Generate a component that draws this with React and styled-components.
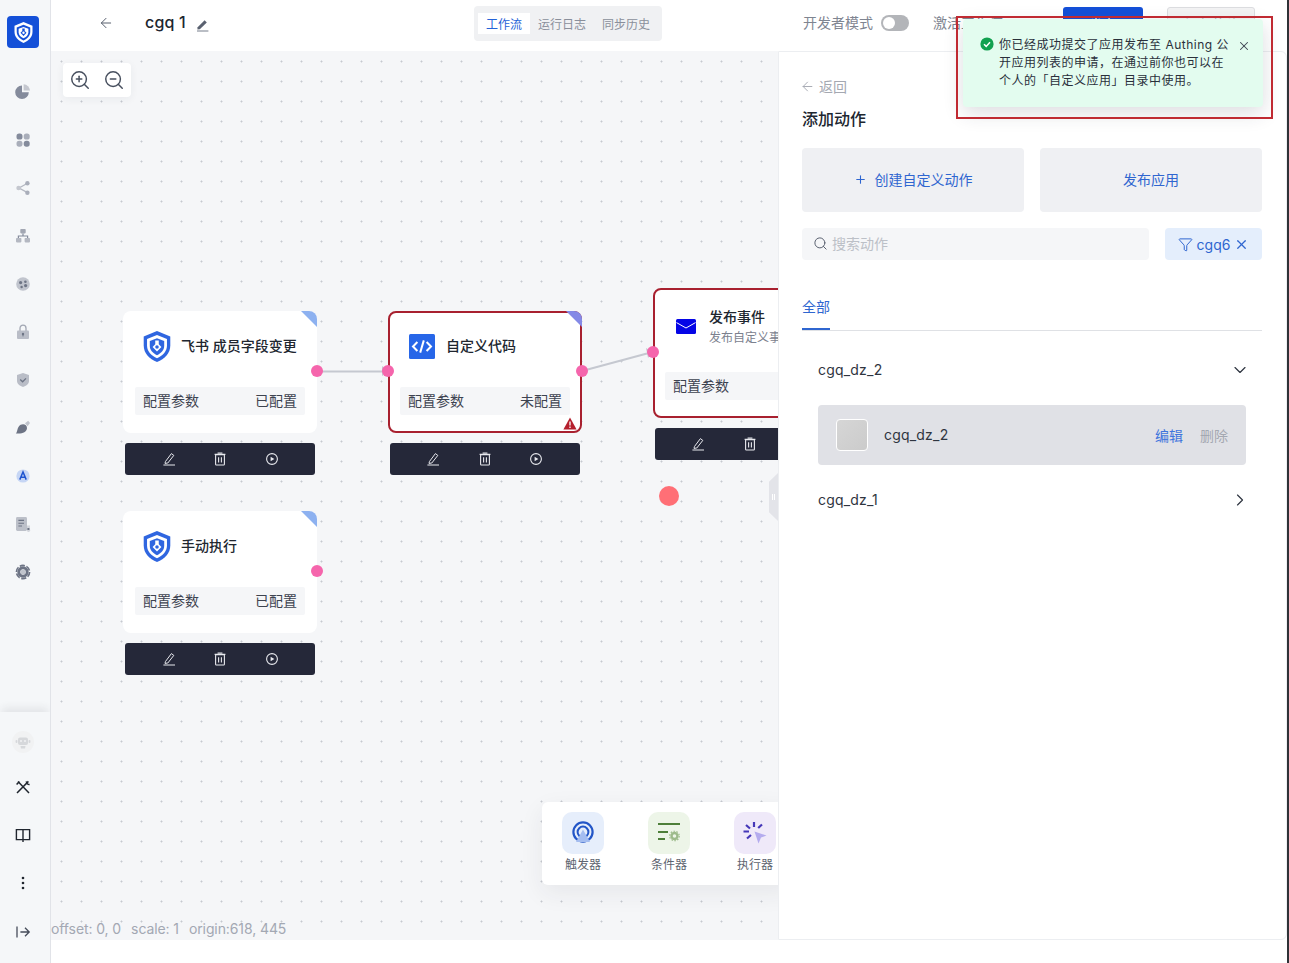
import React from 'react';
import styled, { createGlobalStyle } from 'styled-components';
import { ArrowLeft, ChevronDown, ChevronRight, Search, Filter, X, Plus, ZoomIn, ZoomOut } from 'lucide-react';

const GlobalStyle = createGlobalStyle`
  html, body { margin: 0; padding: 0; background: #fff; }
  body {
    font-family: Inter, "Noto Sans CJK SC", "Noto Sans", sans-serif;
    color: #293350;
    overflow: hidden;
  }
  * { box-sizing: border-box; }
`;

const Page = styled.div`
  display: flex;
  width: 1289px;
  height: 963px;
  overflow: hidden;
  position: relative;
`;

const DarkEdge = styled.div`
  width: 2px;
  flex: none;
  background: #2f3237;
`;

/* ---- left rail ---- */
const Rail = styled.aside`
  width: 51px;
  flex: none;
  display: flex;
  flex-direction: column;
  background: #f5f7f9;
  border-right: 1px solid #e1e3e8;
`;

const Logo = styled.div`
  width: 32px;
  height: 32px;
  margin: 16px 0 20px 7px;
  border-radius: 4px;
  background: #1450d8;
  display: flex;
  align-items: center;
  justify-content: center;
`;

const RailNav = styled.nav`
  flex: 1;
  display: flex;
  flex-direction: column;
`;

const RailItem = styled.div`
  height: 48px;
  display: flex;
  align-items: center;
  justify-content: center;
  padding-right: 5px;
`;

const RobotSlot = styled.div`
  height: 51px;
  padding: 19px 5px 0 0;
  display: flex;
  justify-content: center;
`;

const RailBottom = styled.div`
  display: flex;
  flex-direction: column;
  padding-bottom: 8px;
  box-shadow: 0 -6px 8px -2px rgba(40, 45, 60, 0.09);
  clip-path: inset(-20px 0 0 0);
`;

/* ---- header ---- */
const Main = styled.div`
  flex: 1;
  min-width: 0;
  display: flex;
  flex-direction: column;
`;

const Header = styled.header`
  height: 51px;
  flex: none;
  display: flex;
  align-items: center;
  background: #fff;
  padding-bottom: 5px;
`;

const BackBtn = styled.div`
  margin-left: 47px;
  width: 16px;
  display: flex;
  color: #59606f;
`;

const AppName = styled.div`
  margin-left: 31px;
  margin-top: -2px;
  font-size: 16px;
  font-weight: 500;
  color: #20262f;
  letter-spacing: 0.2px;
`;

const RenameBtn = styled.div`
  margin-left: 10px;
  margin-top: 3px;
  display: flex;
`;

const TabGroup = styled.div`
  margin-left: 265px;
  width: 188px;
  height: 35px;
  padding: 7px 4px;
  margin-top: 1px;
  border-radius: 4px;
  background: #f0f1f3;
  display: flex;
`;

const HeadTab = styled.div`
  width: ${({ $w }) => $w}px;
  display: flex;
  align-items: center;
  justify-content: center;
  font-size: 12px;
  color: ${({ $active }) => ($active ? '#2563d8' : '#8a8f9b')};
  background: ${({ $active }) => ($active ? '#fff' : 'transparent')};
`;

const DevLabel = styled.div`
  margin-left: 141px;
  margin-top: -2px;
  font-size: 14px;
  color: #7f8591;
`;

const Toggle = styled.div`
  margin-left: 8px;
  width: 28px;
  height: 16px;
  border-radius: 8px;
  background: #b3b5b9;
  padding: 2px;
  display: flex;
`;

const Knob = styled.div`
  width: 12px;
  height: 12px;
  border-radius: 50%;
  background: #fff;
`;

const ActiveLabel = styled.div`
  margin-left: 24px;
  margin-top: -2px;
  width: 130px;
  font-size: 14px;
  color: #7f8591;
  white-space: nowrap;
`;

const HeadButton = styled.div`
  margin-top: 1px;
  margin-left: ${({ $ml }) => $ml}px;
  width: ${({ $w }) => $w}px;
  height: 34px;
  border-radius: 3px;
  font-size: 14px;
  display: flex;
  align-items: center;
  justify-content: center;
  background: ${({ $primary }) => ($primary ? '#1450d8' : '#f3f3f4')};
  color: ${({ $primary }) => ($primary ? '#fff' : '#b0b3ba')};
  border: ${({ $primary }) => ($primary ? 'none' : '1px solid #dcdde0')};
`;

/* ---- workspace ---- */
const Workspace = styled.div`
  height: 889px;
  flex: none;
  display: flex;
`;

const Canvas = styled.section`
  flex: 1;
  min-width: 0;
  position: relative;
  overflow: hidden;
  background-color: #f5f6f8;
  background-image: radial-gradient(circle at 10.5px 10.5px, #c6c9d0 0.9px, transparent 1.1px);
  background-size: 20px 20px;
`;

const ZoomBar = styled.div`
  position: absolute;
  left: 12px;
  top: 12px;
  width: 68px;
  height: 34px;
  border-radius: 4px;
  background: #fff;
  box-shadow: 0 2px 8px rgba(40, 45, 60, 0.06);
  display: flex;
  align-items: center;
  justify-content: center;
  gap: 12px;
  color: #474f5e;
`;

const Edges = styled.svg`
  position: absolute;
  left: 0;
  top: 0;
  width: 727px;
  height: 600px;
`;

const Node = styled.div`
  position: absolute;
  left: ${({ $x }) => $x}px;
  top: ${({ $y }) => $y}px;
  width: 194px;
  height: ${({ $h }) => $h || 122}px;
  border-radius: 8px;
  background: #fff;
  border: ${({ $error }) => ($error ? '2px solid #a8202f' : 'none')};
`;

const Corner = styled.div`
  position: absolute;
  right: ${({ $error }) => ($error ? -2 : 0)}px;
  top: ${({ $error }) => ($error ? -2 : 0)}px;
  width: 16px;
  height: 16px;
  border-top-right-radius: 8px;
  background: ${({ $color }) => $color};
  clip-path: polygon(0 0, 100% 0, 100% 100%);
`;

const NodeHead = styled.div`
  position: absolute;
  left: ${({ $left }) => $left}px;
  top: ${({ $top }) => $top}px;
  display: flex;
  align-items: center;
  gap: ${({ $gap }) => $gap}px;
  height: 30px;
`;

const NodeTitle = styled.div`
  font-size: 14px;
  font-weight: 500;
  color: #20262f;
  white-space: nowrap;
  margin-bottom: ${({ $sub }) => ($sub ? 0 : 2)}px;
`;

const NodeSub = styled.div`
  font-size: 12px;
  color: #7b818e;
  white-space: nowrap;
  line-height: 16px;
  margin-top: 4px;
`;

const NodeRow = styled.div`
  position: absolute;
  left: ${({ $error }) => ($error ? 10 : 12)}px;
  right: ${({ $error }) => ($error ? 10 : 12)}px;
  bottom: ${({ $error }) => ($error ? 16 : 18)}px;
  height: 28px;
  padding: 0 8px 2px;
  border-radius: 2px;
  background: #f5f6f8;
  display: flex;
  align-items: center;
  justify-content: space-between;
  font-size: 14px;
  color: #3d4350;
  white-space: nowrap;
`;

const Handle = styled.div`
  position: absolute;
  left: ${({ $x }) => $x - 6}px;
  top: ${({ $y }) => $y - 6}px;
  width: 12px;
  height: 12px;
  border-radius: 50%;
  background: #f565ac;
`;

const NodeTools = styled.div`
  position: absolute;
  left: ${({ $x }) => $x}px;
  top: ${({ $y }) => $y}px;
  width: 190px;
  height: 32px;
  border-radius: 3px;
  background: #252839;
  display: flex;
  align-items: center;
  color: #e8e9ee;
`;

const ToolSlot = styled.div`
  position: absolute;
  left: ${({ $x }) => $x - 7}px;
  width: 14px;
  height: 14px;
  display: flex;
`;

const Warn = styled.svg`
  position: absolute;
  right: 3px;
  bottom: 1px;
  width: 14px;
  height: 13px;
`;

const RedDot = styled.div`
  position: absolute;
  left: 608px;
  top: 435px;
  width: 20px;
  height: 20px;
  border-radius: 50%;
  background: #ff6f76;
`;

const Grip = styled.div`
  position: absolute;
  left: 718px;
  top: 422px;
  width: 9px;
  height: 48px;
  background: #e3e4e9;
  clip-path: polygon(100% 0, 100% 100%, 0 82%, 0 18%);
  display: flex;
  align-items: center;
  justify-content: center;
  gap: 1px;
`;

const GripBar = styled.div`
  width: 1px;
  height: 6px;
  background: #fff;
`;

const Palette = styled.div`
  position: absolute;
  left: 491px;
  top: 751px;
  width: 250px;
  height: 83px;
  padding: 10px 0 0 20px;
  border-radius: 6px;
  background: #fff;
  box-shadow: 0 8px 24px rgba(40, 45, 60, 0.07);
  display: flex;
  gap: 44px;
`;

const PaletteItem = styled.div`
  width: 42px;
  display: flex;
  flex-direction: column;
  align-items: center;
  gap: 2px;
  font-size: 12px;
  line-height: 18px;
  color: #5e6470;
  white-space: nowrap;
`;

const PaletteIcon = styled.div`
  width: 42px;
  height: 42px;
  border-radius: 10px;
  background: ${({ $bg }) => $bg};
  display: flex;
  align-items: center;
  justify-content: center;
`;

const Stats = styled.div`
  position: absolute;
  left: 0;
  bottom: 3px;
  display: flex;
  gap: 10px;
  font-size: 14px;
  line-height: 17px;
  letter-spacing: -0.1px;
  color: #a3a8b3;
  white-space: nowrap;
`;

/* ---- right panel ---- */
const Panel = styled.aside`
  width: 509px;
  flex: none;
  position: relative;
  z-index: 1;
  background: #fff;
  border: 1px solid #eceef1;
  border-top-right-radius: 6px;
  border-bottom-right-radius: 6px;
  padding: 25px 24px 0 23px;
`;

const PanelBack = styled.div`
  display: flex;
  align-items: center;
  gap: 4px;
  height: 18px;
  font-size: 14px;
  color: #a4a8b1;
  margin-left: -2px;
`;

const PanelTitle = styled.h2`
  margin: 12px 0 17px;
  font-size: 16px;
  line-height: 24px;
  font-weight: 500;
  color: #20262f;
`;

const ActionGrid = styled.div`
  display: grid;
  grid-template-columns: 222px 222px;
  gap: 16px;
`;

const ActionCard = styled.div`
  height: 64px;
  padding-bottom: 2px;
  border-radius: 4px;
  background: #eff0f3;
  color: #2f66d0;
  font-size: 14px;
  display: flex;
  align-items: center;
  justify-content: center;
  gap: 8px;
`;

const SearchRow = styled.div`
  margin-top: 16px;
  display: flex;
  gap: 16px;
`;

const SearchBox = styled.div`
  width: 347px;
  height: 32px;
  padding: 0 11px 2px;
  border-radius: 4px;
  background: #f5f6f8;
  display: flex;
  align-items: center;
  gap: 4px;
  font-size: 14px;
  color: #bcc0c7;
`;

const FilterChip = styled.div`
  width: 97px;
  height: 32px;
  border-radius: 4px;
  background: #e4eefc;
  color: #2f66d0;
  font-size: 14px;
  display: flex;
  align-items: center;
  justify-content: center;
  gap: 4px;
`;

const Tabs = styled.div`
  margin-top: 33px;
  height: 38px;
  border-bottom: 1px solid #dfe1e5;
  display: flex;
`;

const PanelTab = styled.div`
  height: 37px;
  padding-top: 4px;
  font-size: 14px;
  line-height: 20px;
  color: #2f66d0;
  border-bottom: 2px solid #2f66d0;
`;

const GroupRow = styled.div`
  height: ${({ $h }) => $h}px;
  margin-top: ${({ $mt }) => $mt || 0}px;
  padding: 0 12px 0 16px;
  display: flex;
  align-items: center;
  justify-content: space-between;
  font-size: 14px;
  letter-spacing: 0.2px;
  color: #2f3540;
`;

const GroupName = styled.span`
  margin-bottom: 2px;
`;

const ActionRow = styled.div`
  margin: 1px 16px 0;
  height: 60px;
  padding: 0 18px;
  border-radius: 4px;
  background: #e0e1e6;
  display: flex;
  align-items: center;
  font-size: 14px;
  color: #2f3540;
`;

const ActionThumb = styled.div`
  width: 32px;
  height: 32px;
  border-radius: 4px;
  border: 1px solid #fff;
  background: linear-gradient(135deg, #d6d6d6, #cbcbcb);
`;

const ActionName = styled.div`
  margin: 0 0 2px 16px;
  flex: 1;
  letter-spacing: 0.2px;
`;

const RowLink = styled.div`
  margin-left: 17px;
  color: ${({ $muted }) => ($muted ? '#a4a8b1' : '#3f74dd')};
`;

/* ---- toast ---- */
const Toast = styled.div`
  position: absolute;
  left: 963px;
  top: 19px;
  z-index: 3;
  width: 300px;
  height: 88px;
  padding: 17px 17px;
  border-radius: 4px;
  background: #e3fcef;
  box-shadow: 0 6px 20px rgba(40, 45, 60, 0.16);
  display: flex;
  gap: 5px;
`;

const ToastCheck = styled.svg`
  flex: none;
  width: 14px;
  height: 14px;
  margin-top: 1px;
`;

const ToastText = styled.div`
  font-size: 12px;
  line-height: 18px;
  letter-spacing: 0.5px;
  color: #2a303b;
  white-space: nowrap;
`;

const ToastClose = styled.div`
  position: absolute;
  right: 12px;
  top: 20px;
  display: flex;
  color: #3d4350;
`;

const Frame = styled.div`
  position: absolute;
  left: 956px;
  top: 16px;
  z-index: 4;
  width: 317px;
  height: 103px;
  border: 2px solid #c02a32;
  pointer-events: none;
`;

/* ---- drawn icons ---- */
const ShieldMark = ({ w = 28, h = 31, outer = '#2f66e0', inner = '#fff' }) => (
  <svg width={w} height={h} viewBox="2 1 24 28">
    <path d="M14 1 L26 6 V14 C26 21 21 26 14 29 C7 26 2 21 2 14 V6 Z" fill={outer} />
    <path d="M14 4.6 L23 8.2 V14 C23 19.5 19 23.2 14 25.6 C9 23.2 5 19.5 5 14 V8.2 Z" fill={inner} />
    <path d="M14 7.5 L20.5 10 V14.5 C20.5 18.5 17.5 21 14 22.8 C10.5 21 7.5 18.5 7.5 14.5 V10 Z" fill={outer} />
    <path d="M12.4 9.5 H15.6 V13 L18 15.4 L14 19.6 L10 15.4 L12.4 13 Z" fill={inner} />
    <circle cx="14" cy="15.4" r="1.6" fill={outer} />
  </svg>
);

const icon = (children, size = 16) => (
  <svg width={size} height={size} viewBox="0 0 16 16">{children}</svg>
);

const railIcons = [
  icon(<>
    <path d="M7 1.4 A6.8 6.8 0 1 0 13.8 8.2 H7 Z" fill="#848b9c" />
    <path d="M8.6 0.2 A6.6 6.6 0 0 1 15 6.6 H8.6 Z" fill="#c4c7cf" />
  </>),
  icon(<>
    <rect x="1.5" y="1.5" width="6" height="6" rx="2.6" fill="#848b9c" />
    <rect x="8.7" y="1.5" width="6" height="6" rx="2.6" fill="#a9aeba" />
    <rect x="1.5" y="8.7" width="6" height="6" rx="2.6" fill="#a9aeba" />
    <rect x="8.7" y="8.7" width="6" height="6" rx="2.6" fill="#848b9c" />
  </>),
  icon(<>
    <path d="M12.5 3.2 L4 8 L12.5 12.6" fill="none" stroke="#b4b8c2" strokeWidth="1.3" />
    <circle cx="3.6" cy="8" r="2.3" fill="#c4c7cf" />
    <circle cx="12.4" cy="3.2" r="2.2" fill="#a9aeba" />
    <circle cx="12.4" cy="12.8" r="2.2" fill="#a9aeba" />
  </>),
  icon(<>
    <rect x="5.3" y="1" width="5.4" height="4.4" rx="0.8" fill="#a2a7b3" />
    <path d="M8 5.4 V8 M3.4 10 V8 H12.6 V10" fill="none" stroke="#848b9c" strokeWidth="1.2" />
    <rect x="1" y="10" width="5.4" height="4.4" rx="0.8" fill="#b4b8c2" />
    <rect x="9.6" y="10" width="5.4" height="4.4" rx="0.8" fill="#b4b8c2" />
  </>),
  icon(<>
    <circle cx="8" cy="8" r="6.8" fill="#c0c4cd" />
    <circle cx="5.6" cy="6.6" r="1.6" fill="#6d7485" />
    <circle cx="10.4" cy="5.8" r="1.3" fill="#6d7485" />
    <circle cx="10.6" cy="9.6" r="1.6" fill="#6d7485" />
    <circle cx="6.6" cy="11" r="1.2" fill="#6d7485" />
  </>),
  icon(<>
    <path d="M5 7 V4.2 A3 3 0 0 1 11 4.2 V7" fill="none" stroke="#a2a7b3" strokeWidth="1.3" />
    <rect x="2" y="6.4" width="12" height="8.6" rx="1" fill="#b9bdc7" />
    <circle cx="8" cy="10" r="1.2" fill="#6d7485" />
    <path d="M8 10 V12.4" stroke="#6d7485" strokeWidth="1" />
  </>),
  icon(<>
    <path d="M8 1 L14 3 V9 C14 12 11 14 8 15 C5 14 2 12 2 9 V3 Z" fill="#b9bdc7" />
    <path d="M5.2 7.6 L7.6 9.8 L11 6.4" fill="none" stroke="#6d7485" strokeWidth="1.3" />
  </>),
  icon(<>
    <path d="M0.8 13.4 C2.6 12.8 1.8 7.2 5.6 4.8 C8.6 3.2 12.2 4.8 12 8.2 C11.6 12.2 7 14.2 0.8 13.4 Z" fill="#6d7485" />
    <path d="M10 3.2 L13.2 0.8 L15 3 L12.6 6.2 Z" fill="#c0c4cd" />
  </>),
  icon(<>
    <circle cx="8" cy="8" r="6.6" fill="#c6d6f5" />
    <path d="M4.8 11.6 L8 4 L11.2 11.6 M6 9.2 H10" fill="none" stroke="#1f55d0" strokeWidth="1.5" />
  </>),
  icon(<>
    <rect x="1" y="1" width="11" height="14" rx="1.4" fill="#bcc0c9" />
    <path d="M3.4 4.4 H9 M3.4 7.2 H9 M3.4 10 H7" stroke="#6d7485" strokeWidth="1.1" />
    <path d="M12 9.5 H15 V13.4 A1.6 1.6 0 0 1 12 15 Z" fill="#d3d6dc" />
    <rect x="12.4" y="12" width="2" height="2" fill="#6d7485" />
  </>),
  icon(<>
    <circle cx="8" cy="8" r="6.6" fill="none" stroke="#6d7485" strokeWidth="1.6" strokeDasharray="5.2 1.7" />
    <circle cx="8" cy="8" r="4.2" fill="none" stroke="#6d7485" strokeWidth="3" />
    <circle cx="8" cy="8" r="2.5" fill="#c0c4cd" />
  </>),
];

const RobotIcon = () => (
  <svg width="22" height="22" viewBox="0 0 22 22">
    <circle cx="11" cy="11" r="11" fill="#f1f2f3" />
    <rect x="6" y="6.5" width="10" height="7.5" rx="2" fill="#d6d8db" />
    <rect x="3.6" y="9" width="1.8" height="3" rx="0.8" fill="#d6d8db" />
    <rect x="16.6" y="9" width="1.8" height="3" rx="0.8" fill="#d6d8db" />
    <circle cx="9" cy="10" r="1" fill="#f1f2f3" />
    <circle cx="13" cy="10" r="1" fill="#f1f2f3" />
    <path d="M8.5 15 H13.5 L13 17.5 H9 Z" fill="#d6d8db" />
  </svg>
);

const ToolsIcon = () => icon(
  <path d="M3 2.6 L14 14 M13.4 2.4 L2 14 M1.6 5.6 L4.4 2.6 M11.4 2.4 A3 3 0 0 0 14.6 5.6" fill="none" stroke="#20262f" strokeWidth="1.5" />
);

const BookIcon = () => icon(
  <path d="M8 2.6 V15 M8 2.6 H1.4 V12.6 H8 M8 2.6 H14.6 V12.6 H8" fill="none" stroke="#20262f" strokeWidth="1.4" />
);

const DotsIcon = () => icon(<>
  <circle cx="8" cy="3" r="1.3" fill="#20262f" />
  <circle cx="8" cy="8" r="1.3" fill="#20262f" />
  <circle cx="8" cy="13" r="1.3" fill="#20262f" />
</>);

const ExpandIcon = () => icon(
  <path d="M2 3.4 V14.6 M5.4 9 H14 M10 4.8 L14.2 9 L10 13.2" fill="none" stroke="#454c5a" strokeWidth="1.3" />
);

const FilledPen = () => (
  <svg width="13" height="14" viewBox="0 0 13 14">
    <path d="M1.6 9.2 L8.6 2.2 L10.8 4.4 L3.8 11.2 L1.4 11.4 Z" fill="#5a6170" />
    <rect x="1" y="12.4" width="11.4" height="1.2" fill="#8d93a0" />
  </svg>
);

const CodeIcon = () => (
  <svg width="26" height="25" viewBox="0 0 26 25">
    <rect width="26" height="25" rx="1.5" fill="#2766e8" />
    <path d="M8.4 8 L4 12.5 L8.4 17 M17.6 8 L22 12.5 L17.6 17 M14.8 6.4 L11.2 18.6" fill="none" stroke="#fff" strokeWidth="2" />
  </svg>
);

const MailIcon = () => (
  <svg width="20" height="15" viewBox="0 0 20 15">
    <rect width="20" height="15" rx="1.5" fill="#0505e6" />
    <path d="M0.5 3.6 L10 9 L19.5 3.6" fill="none" stroke="#fff" strokeWidth="1" />
  </svg>
);

const EditLine = () => (
  <svg width="14" height="14" viewBox="0 0 14 14">
    <path d="M3.4 9.6 L9.4 1.6 L11.8 3.4 L5.8 11 L3 11.4 Z" fill="none" stroke="currentColor" strokeWidth="1" />
    <path d="M1.4 13 H13" stroke="currentColor" strokeWidth="1" />
  </svg>
);

const BinIcon = () => (
  <svg width="14" height="14" viewBox="0 0 14 14">
    <path d="M1.6 2.4 H12.4 M4.6 1 H9.4" stroke="currentColor" strokeWidth="1.1" />
    <rect x="2.6" y="2.8" width="8.8" height="10.2" rx="0.8" fill="none" stroke="currentColor" strokeWidth="1.1" />
    <path d="M5.6 5.2 V10.6 M8.4 5.2 V10.6" stroke="currentColor" strokeWidth="1.1" />
  </svg>
);

const RunIcon = () => (
  <svg width="14" height="14" viewBox="0 0 14 14">
    <circle cx="7" cy="7" r="5.4" fill="none" stroke="currentColor" strokeWidth="1.1" />
    <path d="M5.6 4.8 L9.4 7 L5.6 9.2 Z" fill="currentColor" />
  </svg>
);

const TriggerIcon = () => (
  <svg width="24" height="24" viewBox="0 0 24 24">
    <circle cx="12" cy="11" r="9.6" fill="none" stroke="#2356c7" strokeWidth="2.2" />
    <circle cx="12" cy="11" r="5.4" fill="none" stroke="#2356c7" strokeWidth="2" />
    <path d="M12 8.5 L19 21 H5 Z" fill="#a4bdf0" />
  </svg>
);

const ConditionIcon = () => (
  <svg width="24" height="22" viewBox="0 0 24 22">
    <path d="M1 2 H23 M1 10 H11 M1 17 H8" stroke="#4e7f3a" strokeWidth="2.2" />
    <circle cx="17.5" cy="14" r="3" fill="none" stroke="#9dbb8b" strokeWidth="2.4" />
    <circle cx="17.5" cy="14" r="4.8" fill="none" stroke="#9dbb8b" strokeWidth="1.1" strokeDasharray="1.6 1.4" />
  </svg>
);

const RunnerIcon = () => (
  <svg width="24" height="24" viewBox="0 0 24 24">
    <path d="M11 1 V6 M3 4 L7 7.5 M0.5 10.5 H6 M4 17.5 L8 14 M19 3.5 L15.2 7" stroke="#4537b8" strokeWidth="2.2" />
    <path d="M11.5 10.5 L23.5 14.5 L18 16.5 L15.5 22.5 Z" fill="#b4abee" />
  </svg>
);

/* ---- data ---- */
const nodes = [
  { x: 72, y: 260, title: '飞书 成员字段变更', value: '已配置', corner: '#8db1f0', icon: <ShieldMark />, left: 20, top: 20, gap: 10, tools: [44, 95, 147], toolsX: 74, toolsY: 392 },
  { x: 337, y: 260, title: '自定义代码', value: '未配置', corner: '#8489e6', icon: <CodeIcon />, error: true, warn: true, left: 19, top: 18, gap: 11, tools: [43, 95, 146], toolsX: 339, toolsY: 392 },
  { x: 602, y: 237, h: 130, title: '发布事件', sub: '发布自定义事件', icon: <MailIcon />, error: true, left: 21, top: 21, gap: 13, tools: [43, 95], toolsX: 604, toolsY: 377 },
  { x: 72, y: 460, title: '手动执行', value: '已配置', corner: '#8db1f0', icon: <ShieldMark />, left: 20, top: 20, gap: 10, tools: [44, 95, 147], toolsX: 74, toolsY: 592 },
];

const handles = [[266, 320], [337, 320], [531, 320], [602, 301], [266, 520]];

const toolIcons = [<EditLine key="e" />, <BinIcon key="b" />, <RunIcon key="r" />];

const App = () => (
  <Page>
    <GlobalStyle />
    <Rail>
      <Logo><ShieldMark w={19} h={21} outer="#fff" inner="#1450d8" /></Logo>
      <RailNav>
        {railIcons.map((item, i) => <RailItem key={i}>{item}</RailItem>)}
      </RailNav>
      <RailBottom>
        <RobotSlot><RobotIcon /></RobotSlot>
        <RailItem><ToolsIcon /></RailItem>
        <RailItem><BookIcon /></RailItem>
        <RailItem><DotsIcon /></RailItem>
        <RailItem><ExpandIcon /></RailItem>
      </RailBottom>
    </Rail>

    <Main>
      <Header>
        <BackBtn><ArrowLeft size={16} strokeWidth={1.5} /></BackBtn>
        <AppName>cgq 1</AppName>
        <RenameBtn><FilledPen /></RenameBtn>
        <TabGroup>
          <HeadTab $active $w={52}>工作流</HeadTab>
          <HeadTab $w={64}>运行日志</HeadTab>
          <HeadTab $w={64}>同步历史</HeadTab>
        </TabGroup>
        <DevLabel>开发者模式</DevLabel>
        <Toggle><Knob /></Toggle>
        <ActiveLabel>激活工作流</ActiveLabel>
        <HeadButton $primary $w={80} $ml={0}>发布</HeadButton>
        <HeadButton $w={88} $ml={24}>保存草稿</HeadButton>
      </Header>

      <Workspace>
        <Canvas>
          <ZoomBar>
            <ZoomIn size={22} strokeWidth={1.6} />
            <ZoomOut size={22} strokeWidth={1.6} />
          </ZoomBar>

          <Edges viewBox="0 0 727 600">
            <path d="M266 320.5 H332" stroke="#c5c8d0" strokeWidth="2" fill="none" />
            <path d="M331 315 L337 320 L331 325 Z" fill="#c5c8d0" />
            <path d="M531 320 L596 302.5" stroke="#c5c8d0" strokeWidth="2" fill="none" />
            <path d="M595 297 L602 301 L597 307 Z" fill="#c5c8d0" />
          </Edges>

          {nodes.map((n) => (
            <React.Fragment key={n.title}>
              <Node $x={n.x} $y={n.y} $h={n.h} $error={n.error}>
                {n.corner && <Corner $color={n.corner} $error={n.error} />}
                <NodeHead $left={n.left} $top={n.top} $gap={n.gap}>
                  {n.icon}
                  <div>
                    <NodeTitle $sub={n.sub}>{n.title}</NodeTitle>
                    {n.sub && <NodeSub>{n.sub}</NodeSub>}
                  </div>
                </NodeHead>
                <NodeRow $error={n.error}>
                  <span>配置参数</span>
                  <span>{n.value || '已配置'}</span>
                </NodeRow>
                {n.warn && (
                  <Warn viewBox="0 0 14 13">
                    <path d="M7 0.5 L13.6 12.5 H0.4 Z" fill="#b5202e" />
                    <path d="M7 4.4 V8.6 M7 9.6 V11" stroke="#fff" strokeWidth="1.3" />
                  </Warn>
                )}
              </Node>
              <NodeTools $x={n.toolsX} $y={n.toolsY}>
                {n.tools.map((left, i) => (
                  <ToolSlot key={left} $x={left}>{toolIcons[i]}</ToolSlot>
                ))}
              </NodeTools>
            </React.Fragment>
          ))}

          {handles.map(([x, y]) => <Handle key={`${x}-${y}`} $x={x} $y={y} />)}

          <RedDot />
          <Grip><GripBar /><GripBar /></Grip>

          <Palette>
            <PaletteItem><PaletteIcon $bg="#e6eefb"><TriggerIcon /></PaletteIcon>触发器</PaletteItem>
            <PaletteItem><PaletteIcon $bg="#edf5e8"><ConditionIcon /></PaletteIcon>条件器</PaletteItem>
            <PaletteItem><PaletteIcon $bg="#efe9f9"><RunnerIcon /></PaletteIcon>执行器</PaletteItem>
          </Palette>

          <Stats>
            <span>offset: 0, 0</span>
            <span>scale: 1</span>
            <span>origin:618, 445</span>
          </Stats>
        </Canvas>

        <Panel>
          <PanelBack><ArrowLeft size={15} strokeWidth={1.5} />返回</PanelBack>
          <PanelTitle>添加动作</PanelTitle>
          <ActionGrid>
            <ActionCard><Plus size={13} strokeWidth={2} />创建自定义动作</ActionCard>
            <ActionCard>发布应用</ActionCard>
          </ActionGrid>
          <SearchRow>
            <SearchBox><Search size={15} color="#5a6170" strokeWidth={1.6} />搜索动作</SearchBox>
            <FilterChip><Filter size={15} strokeWidth={1.6} />cgq6<X size={15} strokeWidth={2} /></FilterChip>
          </SearchRow>
          <Tabs><PanelTab>全部</PanelTab></Tabs>
          <GroupRow $h={68} $mt={5}><GroupName>cgq_dz_2</GroupName><ChevronDown size={20} strokeWidth={1.4} /></GroupRow>
          <ActionRow>
            <ActionThumb />
            <ActionName>cgq_dz_2</ActionName>
            <RowLink>编辑</RowLink>
            <RowLink $muted>删除</RowLink>
          </ActionRow>
          <GroupRow $h={70}><GroupName>cgq_dz_1</GroupName><ChevronRight size={20} strokeWidth={1.4} /></GroupRow>
        </Panel>
      </Workspace>
    </Main>
    <DarkEdge />

    <Toast>
      <ToastCheck viewBox="0 0 14 14">
        <circle cx="7" cy="7" r="6.6" fill="#12a150" />
        <path d="M4 7.2 L6.2 9.4 L10 5.2" fill="none" stroke="#fff" strokeWidth="1.5" />
      </ToastCheck>
      <ToastText>
        你已经成功提交了应用发布至 Authing 公<br />
        开应用列表的申请，在通过前你也可以在<br />
        个人的「自定义应用」目录中使用。
      </ToastText>
      <ToastClose><X size={14} strokeWidth={1.8} /></ToastClose>
    </Toast>
    <Frame />
  </Page>
);

export default App;
